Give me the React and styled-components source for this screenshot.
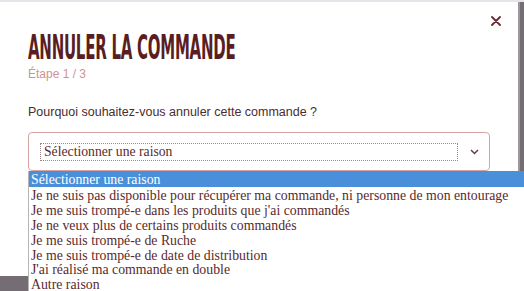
import React from 'react';
import styled, {createGlobalStyle} from 'styled-components';

const GlobalStyle = createGlobalStyle`
    html, body {
        margin:0;
        padding:0;
        width:524px;
        height:291px;
        overflow:hidden;
        background-color:#756d74;
    }
`

const Page = styled.div`
    width:524px;
    height:291px;
    position:relative;
    border-top:2px solid #e4e4ea;
    box-sizing:border-box;
`

const Modal = styled.div`
    width:520px;
    height:274px;
    box-sizing:border-box;
    background-color:#fff;
    border-right:2px solid #9b979c;
    padding:29px 28px 0 28px;
    display:flex;
    flex-direction:column;
    position:relative;
`

const CloseButton = styled.button`
    position:absolute;
    top:11px;
    right:14px;
    width:16px;
    height:16px;
    padding:0;
    border:none;
    background:none;
    display:flex;
    align-items:center;
    justify-content:center;
`

const Title = styled.h1`
    margin:0;
    font-family:"DejaVu Sans Condensed","DejaVu Sans",sans-serif;
    font-weight:bold;
    font-size:33px;
    line-height:33px;
    letter-spacing:-0.5px;
    color:#5a1e22;
    transform:scaleX(0.505);
    transform-origin:left center;
    white-space:nowrap;
`

const Step = styled.div`
    margin-top:3px;
    font-family:"Liberation Sans",Arial,sans-serif;
    font-size:12px;
    line-height:14px;
    color:#d29191;
`

const Question = styled.p`
    margin:24px 0 0 0;
    font-family:"Liberation Sans",Arial,sans-serif;
    font-size:12.5px;
    color:#4b2b2d;
`

const SelectBox = styled.div`
    margin-top:13px;
    width:462px;
    height:39px;
    box-sizing:border-box;
    border:1px solid #d6a3a3;
    border-radius:4px;
    display:flex;
    align-items:center;
    padding:0 10px 0 11px;
    gap:12px;
`

const FocusRing = styled.div`
    flex:1;
    height:18px;
    box-sizing:border-box;
    border:1px dotted #a08488;
    display:flex;
    align-items:center;
    padding-left:3px;
    font-family:"Liberation Serif","Times New Roman",serif;
    font-size:13.7px;
    color:#5a2a2c;
`

const Options = styled.ul`
    position:absolute;
    left:28px;
    top:169px;
    width:496px;
    margin:0;
    padding:0;
    list-style:none;
    background-color:#fff;
    border-left:1px solid #b5b5b5;
    font-family:"Liberation Serif","Times New Roman",serif;
    font-size:13.8px;
    line-height:15px;
`

const Option = styled.li`
    padding:1px 0 0 2px;
    height:${p => p.$selected ? '16px' : '14.9px'};
    box-sizing:border-box;
    white-space:nowrap;
    color:${p => p.$selected ? '#fff' : '#5a2a2c'};
    background-color:${p => p.$selected ? '#4a8fd9' : 'transparent'};
`

const reasons = [
    'Sélectionner une raison',
    'Je ne suis pas disponible pour récupérer ma commande, ni personne de mon entourage',
    "Je me suis trompé-e dans les produits que j'ai commandés",
    'Je ne veux plus de certains produits commandés',
    'Je me suis trompé-e de Ruche',
    'Je me suis trompé-e de date de distribution',
    "J'ai réalisé ma commande en double",
    'Autre raison',
];

export default function App() {
    return (
        <Page>
            <GlobalStyle/>
            <Modal>
                <CloseButton aria-label="Fermer">
                    <svg width="10" height="10" viewBox="0 0 10 10">
                        <path d="M1 1 L9 9 M9 1 L1 9" stroke="#6a2a32" strokeWidth="1.8" strokeLinecap="round"/>
                    </svg>
                </CloseButton>
                <Title>ANNULER LA COMMANDE</Title>
                <Step>Étape 1 / 3</Step>
                <Question>Pourquoi souhaitez-vous annuler cette commande ?</Question>
                <SelectBox>
                    <FocusRing>Sélectionner une raison</FocusRing>
                    <svg width="9" height="6" viewBox="0 0 9 6">
                        <path d="M1 1 L4.5 4.5 L8 1" fill="none" stroke="#6a3a40" strokeWidth="1.5"/>
                    </svg>
                </SelectBox>
            </Modal>
            <Options>
                {reasons.map((r, i) => (
                    <Option key={r} $selected={i === 0}>{r}</Option>
                ))}
            </Options>
        </Page>
    )
}
